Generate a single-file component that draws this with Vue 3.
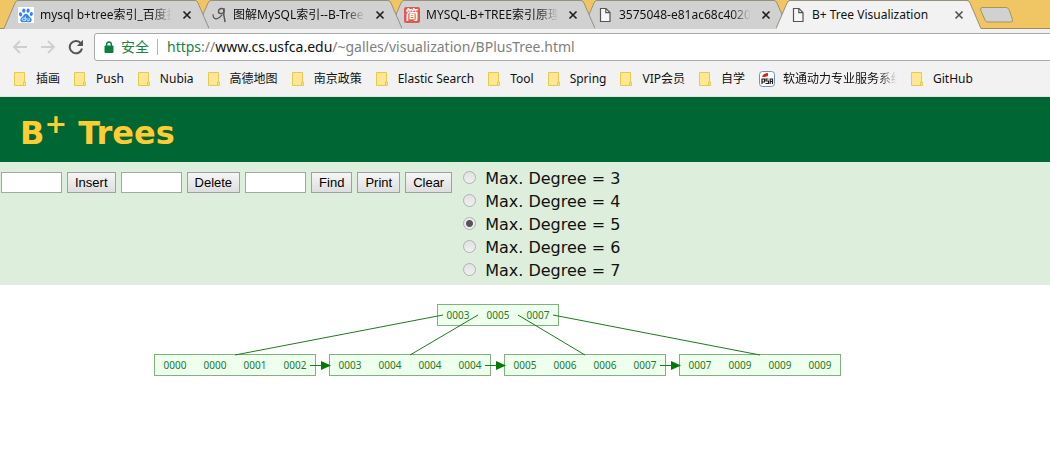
<script setup>
import { ref } from 'vue'

const tabs = [
  { icon: 'paw', title: 'mysql b+tree索引_百度搜索' },
  { icon: 'swirl', title: '图解MySQL索引--B-Tree（B+Tree）' },
  { icon: 'jian', title: 'MYSQL-B+TREE索引原理' },
  { icon: 'page', title: '3575048-e81ac68c40203' },
  { icon: 'page', title: 'B+ Tree Visualization', active: true }
]
const bookmarks = ['插画', 'Push', 'Nubia', '高德地图', '南京政策', 'Elastic Search', 'Tool', 'Spring', 'VIP会员', '自学', '软通动力专业服务系统', 'GitHub']
const degrees = [3, 4, 5, 6, 7]
const degree = ref(5)
const insertValue = ref('')
const deleteValue = ref('')
const findValue = ref('')

const nodes = [
  { x: 437, y: 19, keys: ['0003', '0005', '0007'] },
  { x: 154, y: 69, keys: ['0000', '0000', '0001', '0002'] },
  { x: 329, y: 69, keys: ['0003', '0004', '0004', '0004'] },
  { x: 504, y: 69, keys: ['0005', '0006', '0006', '0007'] },
  { x: 679, y: 69, keys: ['0007', '0009', '0009', '0009'] }
]
const edges = [
  [443, 30, 235, 70],
  [478, 30, 410, 70],
  [518, 30, 585, 70],
  [553, 30, 760, 70]
]
const links = [310, 485, 660]
</script>

<template>
  <div class="browser">
    <nav class="tabs" aria-label="Tabs">
      <div v-for="(t, i) in tabs" :key="i" class="tab" :class="{ active: t.active }" :style="{ zIndex: t.active ? 9 : 5 - i }">
        <svg class="shape" viewBox="0 0 205 29" preserveAspectRatio="none" aria-hidden="true">
          <path class="fill" d="M0 29 L11 3 Q12 1 14 1 L191 1 Q193 1 194 3 L205 29 Z" />
          <path class="line" d="M0 28.5 L11 3 Q12 .5 14 .5 L191 .5 Q193 .5 194 3 L205 28.5" />
        </svg>
        <button class="tab-main" type="button">
          <svg v-if="t.icon === 'paw'" class="fav" viewBox="0 0 16 16">
            <rect width="16" height="16" fill="#fff" />
            <g fill="#2f86f2">
              <ellipse cx="2.6" cy="7.4" rx="1.6" ry="2.1" transform="rotate(-12 2.6 7.4)" />
              <ellipse cx="5.8" cy="3.6" rx="1.6" ry="2.2" />
              <ellipse cx="10.1" cy="3.6" rx="1.6" ry="2.2" transform="rotate(8 10.1 3.6)" />
              <ellipse cx="13.3" cy="7" rx="1.6" ry="2.1" transform="rotate(12 13.3 7)" />
              <path d="M8 6.8c1.6 0 2.3 1.5 3.3 2.6 1.2 1.2 2.6 2 2.3 3.8-.3 2-2.2 2.3-3.7 2-1.3-.2-2.5-.2-3.8 0-1.5.3-3.4 0-3.7-2-.3-1.8 1.1-2.6 2.300-3.800C5.700 8.300 6.400 6.800 8 6.800z" />
            </g>
            <path d="M7.300 9.500v4.200H5.600a1.200 1.200 0 0 1 0-2.500h1.700M8.900 11v2c0 .5.300.8.800.8h1.500V11" fill="none" stroke="#fff" stroke-width=".8" />
          </svg>
          <svg v-else-if="t.icon === 'swirl'" class="fav" viewBox="0 0 16 16" fill="none" stroke="#555" stroke-linecap="round">
            <path d="M2 7.500c0 3 1.500 4.500 3.500 4.300 2.500-.3 4-2 5.500-4" stroke-width="1.200" />
            <path d="M12.800 2.200C10.500.8 7.500 1.800 7.500 4.500c0 2.500 3.500 2.800 5.300.6z" stroke-width="1.500" />
            <path d="M13 2c-.6 4-.4 8 1 12.500" stroke-width="1.500" />
          </svg>
          <span v-else-if="t.icon === 'jian'" class="fav jian">简</span>
          <svg v-else class="fav" viewBox="0 0 16 16" fill="#f7f7f7" stroke="#555" stroke-width="1.200">
            <path d="M3.500 1.500h5.500l4 4v9H3.500z" />
            <path d="M8.800 1.500v4.200h4.200" fill="none" />
          </svg>
          <span class="tab-title">{{ t.title }}</span>
        </button>
        <button class="close" type="button" aria-label="Close tab">
          <svg viewBox="0 0 10 10"><path d="M1.500 1.500l7 7M8.500 1.500l-7 7" /></svg>
        </button>
      </div>
      <button class="new-tab" type="button" aria-label="New tab">
        <svg viewBox="0 0 36 18"><path d="M4 1.500h24q2 0 3 2l3.500 10q.7 2.500-1.500 2.500H10q-2 0-3-2L2.700 4q-.7-2.500 1.300-2.500z" /></svg>
      </button>
    </nav>

    <div class="toolbar">
      <button class="nav" type="button" aria-label="Back"><svg viewBox="0 0 16 16" class="pale"><path d="M15 8H2M8 2L2 8l6 6" /></svg></button>
      <button class="nav" type="button" aria-label="Forward"><svg viewBox="0 0 16 16" class="pale"><path d="M1 8h13M8 2l6 6-6 6" /></svg></button>
      <button class="nav" type="button" aria-label="Reload">
        <svg viewBox="0 0 16 16"><path d="M13 4.500A6.200 6.200 0 1 0 14 9.500" fill="none" stroke="#555" stroke-width="2" /><path d="M15 .8v6.200H8.800z" fill="#555" /></svg>
      </button>
      <div class="address">
        <svg class="lock" viewBox="0 0 10 12"><path d="M1 5h8v6.500H1z" fill="#0b8043" stroke="#0b8043" stroke-linejoin="round" /><path d="M2.700 5.500V3.300a2.300 2.300 0 0 1 4.600 0v2.200" fill="none" stroke="#0b8043" stroke-width="1.400" /></svg>
        <span class="secure">安全</span>
        <span class="sep"></span>
        <span class="url"><span class="green">https</span>://<span class="host">www.cs.usfca.edu</span>/~galles/visualization/BPlusTree.html</span>
      </div>
    </div>

    <nav class="bookmarks" aria-label="Bookmarks">
      <a v-for="b in bookmarks" :key="b" href="#" :class="{ long: b.startsWith('软') }">
        <svg v-if="b.startsWith('软')" class="psa" viewBox="0 0 16 16">
          <rect x=".5" y=".5" width="15" height="15" rx="3" fill="#fff" stroke="#6f93b5" />
          <path d="M3 6C4 3 6 2 9 2v3L6 6z" fill="#d22" />
          <path d="M3 13V8h2.500v3H3M9.500 8H7v2h2.500v2.500H6.500M11.200 13V8h2.300v5M11.200 10.500h2.300" fill="none" stroke="#222" stroke-width="1.200" />
        </svg>
        <svg v-else class="folder" viewBox="0 0 12 14">
          <path d="M.5.500h10v9.500h1v3.500H.5z" fill="#ffe794" stroke="#e8c94f" />
          <path d="M9.500 13v-3h1.500" fill="none" stroke="#e8c94f" />
        </svg>
        <span>{{ b }}</span>
      </a>
    </nav>
  </div>

  <main>
    <header><h1>B<sup>+</sup> Trees</h1></header>
    <form class="controls" @submit.prevent>
      <div class="actions">
        <input v-model="insertValue" type="text" aria-label="Value to insert">
        <button type="button">Insert</button>
        <input v-model="deleteValue" type="text" aria-label="Value to delete">
        <button type="button">Delete</button>
        <input v-model="findValue" type="text" aria-label="Value to find">
        <button type="button">Find</button>
        <button type="button">Print</button>
        <button type="button">Clear</button>
      </div>
      <div class="degrees" role="radiogroup" aria-label="Maximum degree">
        <label v-for="d in degrees" :key="d"><input v-model="degree" type="radio" name="degree" :value="d">Max. Degree = {{ d }}</label>
      </div>
    </form>
    <svg class="tree" width="1050" height="170" viewBox="0 0 1050 170" role="img" aria-label="B+ tree">
      <g v-for="(n, i) in nodes" :key="i">
        <rect :x="n.x + 0.5" :y="n.y + 0.5" :width="n.keys.length * 40 + 1" height="21" />
        <text v-for="(k, j) in n.keys" :key="j" :x="n.x + 21 + j * 40" :y="n.y + 15">{{ k }}</text>
      </g>
      <line v-for="(e, i) in edges" :key="'e' + i" :x1="e[0]" :y1="e[1]" :x2="e[2]" :y2="e[3]" />
      <g v-for="x in links" :key="x">
        <line :x1="x" y1="80.500" :x2="x + 12" y2="80.500" />
        <path :d="`M${x + 11} 76l10 4.500-10 4.500z`" />
      </g>
    </svg>
  </main>
</template>

<style>
body { background: #fff; }
</style>

<style scoped>
.browser { background: #f2f2f2; font: 12px/16px "Noto Sans", "Noto Sans CJK SC", sans-serif; color: #111; overflow: hidden; border-bottom: 1px solid #dde6df; }
button { font: inherit; color: inherit; }
.tabs { display: flex; height: 29px; background: #f0c665; padding-left: 4px; box-shadow: inset 0 -1px #a08c60; }
.tab { position: relative; flex: 0 0 205px; min-width: 0; margin-right: -12px; display: flex; align-items: center; padding: 0 17px 0 14px; box-sizing: border-box; }
.shape { position: absolute; inset: 0; width: 100%; height: 100%; }
.fill { fill: #d1d1d1; }
.active .fill { fill: #f2f2f2; }
.line { fill: none; stroke: #96907f; }
.tab-main { position: relative; flex: 1; min-width: 0; display: flex; align-items: center; gap: 6px; padding: 0; border: 0; background: none; text-align: left; }
.fav { flex: 0 0 16px; width: 16px; height: 16px; }
.jian { background: #dc5b4c; color: #fff; border-radius: 2px; font-size: 13px; font-weight: bold; line-height: 15px; text-align: center; }
.tab-title { flex: 1; min-width: 0; overflow: hidden; white-space: nowrap; margin-right: 10px; mask-image: linear-gradient(to right, #000 85%, transparent); }
.active .tab-title { mask-image: none; margin-right: 0; }
.close { position: relative; width: 10px; height: 10px; padding: 0; border: 0; background: none; display: flex; }
.close svg { width: 10px; height: 10px; fill: none; stroke: #222; stroke-width: 1.700; }
.active .close svg { stroke: #555; }
.new-tab { margin-left: 9px; padding: 0; border: 0; background: none; align-self: center; display: flex; }
.new-tab svg { width: 36px; height: 18px; fill: #d1d1d1; stroke: #aa9258; }

.toolbar { display: flex; align-items: center; padding: 4px 0 0 12px; }
.nav { width: 16px; height: 16px; margin-right: 12px; padding: 0; border: 0; background: none; display: flex; }
.nav svg { width: 16px; height: 16px; }
.pale { fill: none; stroke: #cfcfcf; stroke-width: 1.800; }
.address { flex: 1; min-width: 0; display: flex; align-items: center; height: 26px; margin-right: -4px; margin-left: -2px; border: 1px solid #a9a9a9; border-radius: 3px; background: #fff; padding-left: 9px; font-size: 14px; line-height: 20px; white-space: nowrap; }
.lock { width: 10px; height: 12px; margin-right: 7px; }
.secure, .green { color: #1a8046; }
.sep { width: 1px; height: 16px; background: #b5b5b5; margin: 0 9px 0 8px; }
.url { color: #808080; }
.host { color: #111; }

.bookmarks { display: flex; align-items: center; gap: 14px; height: 35px; padding-left: 14px; }
.bookmarks a { display: flex; align-items: center; gap: 10px; color: #111; text-decoration: none; white-space: nowrap; }
.folder { width: 12px; height: 14px; }
.psa { width: 16px; height: 16px; flex: none; }
.bookmarks .long { gap: 8px; }
.long span { width: 114px; overflow: hidden; mask-image: linear-gradient(to right, #000 84%, transparent); }

main { font-family: Verdana, "DejaVu Sans", sans-serif; }
header { background: #063; padding: 15px 20px 8px; }
h1 { margin: 0; color: #fc3; font-size: 32px; line-height: 42px; font-weight: bold; }
sup { font-size: 27px; line-height: 0; vertical-align: 11px; }
.controls { display: flex; align-items: flex-start; background: #ded; padding: 5px 0 2px; border-bottom: 1px solid #e6ebe6; }
.actions { display: flex; gap: 5px; padding: 5px 0 0 1px; }
.actions input { box-sizing: border-box; width: 61px; height: 21px; border: 1px solid #a0aaa0; background: #fff; padding: 1px; }
.actions button { box-sizing: border-box; height: 21px; border: 1px solid #a0a0a0; background: linear-gradient(#f6f6f6, #dedede); padding: 0 7px; font: 13px/17px "Liberation Sans", Arial, sans-serif; color: #000; }
.degrees { margin-left: 11px; }
.degrees label { display: flex; align-items: center; height: 23px; font-size: 16px; color: #111; }
.degrees input { appearance: none; width: 13px; height: 13px; margin: 0 9px 2px 0; border: 1px solid #b0b3b0; border-radius: 50%; background: linear-gradient(#e2e2e2, #f0f0f0); }
.degrees input:checked { background: radial-gradient(circle, #555 0 3px, #ececec 4px); }
.tree { display: block; }
.tree rect { fill: #efe; stroke: #7fb27f; }
.tree text { font: 10px "Noto Sans", sans-serif; fill: #1c7a1c; text-anchor: middle; }
.tree line { stroke: #1c7a1c; }
.tree path { fill: #007a00; }
</style>
